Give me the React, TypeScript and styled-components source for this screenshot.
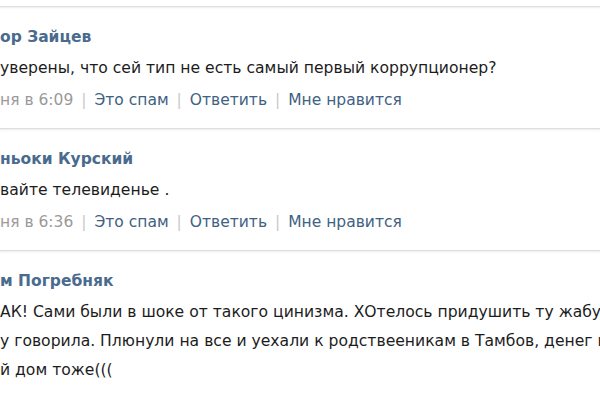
import styled, { createGlobalStyle } from "styled-components"

const GlobalStyle = createGlobalStyle`
	html, body {
		margin: 0;
		padding: 0;
		background: #ffffff;
	}
	body {
		width: 600px;
		height: 400px;
		overflow: hidden;
		font-family: "DejaVu Sans", "Liberation Sans", sans-serif;
	}
`

interface CommentData {
	author: string
	lines: string[]
	time?: string
}

const COMMENTS: CommentData[] = [
	{
		author: "ор Зайцев",
		lines: ["уверены, что сей тип не есть самый первый коррупционер?"],
		time: "ня в 6:09",
	},
	{
		author: "ньоки Курский",
		lines: ["вайте телевиденье ."],
		time: "ня в 6:36",
	},
	{
		author: "м Погребняк",
		lines: [
			"АК! Сами были в шоке от такого цинизма. ХОтелось придушить ту жабу",
			"у говорила. Плюнули на все и уехали к родствееникам в Тамбов, денег на",
			"й дом тоже(((",
		],
	},
]

function Comment({ author, lines, time }: CommentData) {
	return (
		<Item>
			<Author>{author}</Author>
			{lines.map((line, i) => (
				<Text key={i}>{line}</Text>
			))}
			{time && (
				<Meta>
					<Date>{time}</Date>
					<Divider>|</Divider>
					<Action>Это спам</Action>
					<Divider>|</Divider>
					<Action>Ответить</Action>
					<Divider>|</Divider>
					<Action>Мне нравится</Action>
				</Meta>
			)}
		</Item>
	)
}

export default function App() {
	return (
		<>
			<GlobalStyle />
			<Feed>
				{COMMENTS.map((c, i) => (
					<Comment key={i} {...c} />
				))}
			</Feed>
		</>
	)
}

const Feed = styled.div`
	width: 600px;
	height: 400px;
	overflow: hidden;
	padding-top: 6px;
	box-sizing: border-box;
`

const Item = styled.div`
	border-top: 1px solid #dedede;
	box-shadow: inset 0 2px 2px -1px #ececec;
	padding: 15px 0 12px 0;
	display: flex;
	flex-direction: column;
`

const Author = styled.div`
	font-size: 15.5px;
	font-weight: bold;
	line-height: 31px;
	color: #4a6b8e;
	margin-bottom: 1px;
	white-space: nowrap;
`

const Text = styled.div`
	font-size: 15.6px;
	line-height: 29px;
	color: #1c1c1c;
	white-space: nowrap;
	overflow: hidden;
`

const Meta = styled.div`
	display: flex;
	align-items: center;
	gap: 8px;
	margin-top: 2px;
	font-size: 15.5px;
	line-height: 31px;
	white-space: nowrap;
`

const Date = styled.span`
	color: #9a9a9a;
`

const Divider = styled.span`
	color: #c9c9c9;
`

const Action = styled.span`
	color: #3f6182;
`
